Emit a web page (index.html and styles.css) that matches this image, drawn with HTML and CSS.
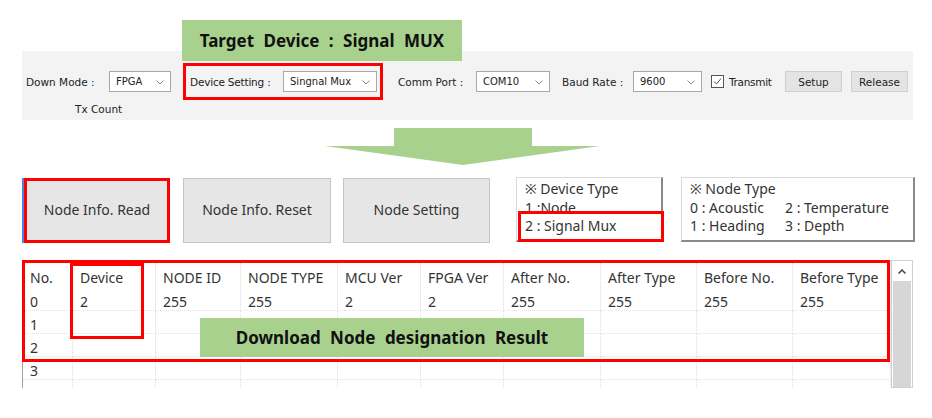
FILE: index.html
```html
<!DOCTYPE html>
<html lang="en">
<head>
  <meta charset="UTF-8">
  <meta name="viewport" content="width=device-width, initial-scale=1.0">
  <title>Node Designation</title>
  <link rel="stylesheet" href="styles.css">
</head>
<body>
  <div class="page">
    <div class="banner">Target Device : Signal MUX</div>

    <div class="toolbar">
      <div class="toolbar-row">
        <span class="tb-label lbl-mode">Down Mode :</span>
        <div class="combo w-mode">FPGA<svg class="chev" viewBox="0 0 8 5"><polyline points="0.5,0.5 4,4 7.5,0.5"/></svg></div>

        <div class="device-group">
          <span class="tb-label lbl-device">Device Setting :</span>
          <div class="combo w-device">Singnal Mux<svg class="chev" viewBox="0 0 8 5"><polyline points="0.5,0.5 4,4 7.5,0.5"/></svg></div>
        </div>

        <span class="tb-label lbl-port">Comm Port :</span>
        <div class="combo w-port">COM10<svg class="chev" viewBox="0 0 8 5"><polyline points="0.5,0.5 4,4 7.5,0.5"/></svg></div>

        <span class="tb-label lbl-baud">Baud Rate :</span>
        <div class="combo w-baud">9600<svg class="chev" viewBox="0 0 8 5"><polyline points="0.5,0.5 4,4 7.5,0.5"/></svg></div>

        <span class="check"><svg viewBox="0 0 13 13"><rect x="0.5" y="0.5" width="12" height="12"/><polyline points="3,6.5 5.5,9 10,3.5"/></svg></span>
        <span class="tb-label lbl-transmit">Transmit</span>
        <button class="tb-button">Setup</button>
        <button class="tb-button btn-release">Release</button>
      </div>
      <div class="tx-count">Tx Count</div>
    </div>

    <svg class="arrow" viewBox="0 0 275 37">
      <polygon points="69,0 207,0 207,18 275,18 138,37 0,18 69,18"/>
    </svg>

    <div class="actions">
      <button class="action-btn btn-read">Node Info. Read</button>
      <button class="action-btn btn-reset">Node Info. Reset</button>
      <button class="action-btn btn-setting">Node Setting</button>

      <div class="legend legend-device">
        <div>※ Device Type</div>
        <div>1 :Node</div>
        <div class="mux-line">2 : Signal Mux</div>
        <div class="mark-mux"></div>
      </div>

      <div class="legend legend-node">
        <div>※ Node Type</div>
        <div class="legend-pair"><span>0 : Acoustic</span><span>2 : Temperature</span></div>
        <div class="legend-pair"><span>1 : Heading</span><span>3 : Depth</span></div>
      </div>
    </div>

    <div class="grid-wrap">
      <div class="grid-area">
        <div class="grid">
          <div class="cell head">No.</div>
          <div class="cell head">Device</div>
          <div class="cell head">NODE ID</div>
          <div class="cell head">NODE TYPE</div>
          <div class="cell head">MCU Ver</div>
          <div class="cell head">FPGA Ver</div>
          <div class="cell head">After No.</div>
          <div class="cell head">After Type</div>
          <div class="cell head">Before No.</div>
          <div class="cell head">Before Type</div>

          <div class="cell">0</div>
          <div class="cell">2</div>
          <div class="cell">255</div>
          <div class="cell">255</div>
          <div class="cell">2</div>
          <div class="cell">2</div>
          <div class="cell">255</div>
          <div class="cell">255</div>
          <div class="cell">255</div>
          <div class="cell">255</div>

          <div class="cell">1</div>
          <div class="cell"></div><div class="cell"></div><div class="cell"></div><div class="cell"></div>
          <div class="cell"></div><div class="cell"></div><div class="cell"></div><div class="cell"></div><div class="cell"></div>

          <div class="cell">2</div>
          <div class="cell"></div><div class="cell"></div><div class="cell"></div><div class="cell"></div>
          <div class="cell"></div><div class="cell"></div><div class="cell"></div><div class="cell"></div><div class="cell"></div>

          <div class="cell">3</div>
          <div class="cell"></div><div class="cell"></div><div class="cell"></div><div class="cell"></div>
          <div class="cell"></div><div class="cell"></div><div class="cell"></div><div class="cell"></div><div class="cell"></div>

          <div class="cell"></div>
          <div class="cell"></div><div class="cell"></div><div class="cell"></div><div class="cell"></div>
          <div class="cell"></div><div class="cell"></div><div class="cell"></div><div class="cell"></div><div class="cell"></div>
        </div>
        <div class="scrollbar">
          <div class="scroll-up"><svg viewBox="0 0 8 5"><polyline points="0.5,4.5 4,1 7.5,4.5"/></svg></div>
          <div class="scroll-track"></div>
        </div>
      </div>

      <div class="mark-grid"></div>
      <div class="mark-device"></div>
      <div class="result-note">Download Node designation Result</div>
    </div>
  </div>
</body>
</html>
```

FILE: styles.css
```css
body {
  margin: 0;
  background-color: #fff;
  font-family: "Noto Sans", "Open Sans", sans-serif;
  color: #333;
}

.page {
  width: 932px;
  height: 418px;
  overflow: hidden;
}

/* annotation banner */
.banner {
  position: relative;
  z-index: 1;
  width: 280px;
  height: 41px;
  margin: 20px 0 -10px 182px;
  background-color: #a9d18e;
  color: #111;
  font-size: 17px;
  font-weight: 700;
  word-spacing: 5px;
  display: flex;
  align-items: center;
  justify-content: center;
}

/* toolbar */
.toolbar {
  width: 891px;
  height: 69px;
  margin-left: 22px;
  background-color: #f3f3f3;
  font-family: "DejaVu Sans", Verdana, sans-serif;
  font-size: 10.5px;
  color: #222;
}

.toolbar-row {
  display: flex;
  align-items: center;
  height: 37px;
  padding-top: 12px;
  padding-left: 4px;
}

.tb-label {
  white-space: nowrap;
}

.lbl-mode { width: 83px; }
.lbl-device { width: 93px; letter-spacing: -0.2px; }
.lbl-port { width: 78px; margin-left: 15px; }
.lbl-baud { width: 71px; margin-left: 12px; }
.lbl-transmit { width: 56px; margin-left: 5px; letter-spacing: -0.3px; }

.combo {
  position: relative;
  box-sizing: border-box;
  height: 21px;
  padding-left: 6px;
  background-color: #fff;
  border: 1px solid #a8a8a8;
  display: flex;
  align-items: center;
  font-size: 10px;
}

.chev {
  position: absolute;
  right: 6px;
  top: 8px;
  width: 8px;
  height: 5px;
  fill: none;
  stroke: #888;
  stroke-width: 1;
}

.w-mode { width: 62px; }
.w-device { width: 94px; }
.w-port { width: 74px; }
.w-baud { width: 69px; }

.device-group {
  box-sizing: border-box;
  display: flex;
  align-items: center;
  width: 200px;
  height: 37px;
  margin-left: 12px;
  padding-left: 4px;
  border: 3px solid #ff0000;
}

.check {
  width: 13px;
  height: 13px;
  margin-left: 9px;
}

.check svg {
  display: block;
  width: 13px;
  height: 13px;
  fill: #fff;
  stroke: #555;
  stroke-width: 1;
}

.check polyline {
  fill: none;
}

.tb-button {
  box-sizing: border-box;
  width: 57px;
  height: 21px;
  padding: 0;
  background-color: #e4e4e4;
  border: 1px solid #cfcfcf;
  font-family: "DejaVu Sans", Verdana, sans-serif;
  font-size: 10.5px;
  color: #222;
}

.btn-release {
  margin-left: 9px;
}

.tx-count {
  height: 18px;
  line-height: 18px;
  padding-left: 53px;
}

/* arrow */
.arrow {
  display: block;
  width: 275px;
  height: 37px;
  margin: 8px 0 0 325px;
  fill: #a9d18e;
}

/* action buttons and legends */
.actions {
  display: flex;
  align-items: flex-start;
  height: 65px;
  margin: 13px 0 0 22px;
}

.action-btn {
  box-sizing: border-box;
  width: 148px;
  height: 65px;
  padding: 0 0 2px;
  background-color: #e6e6e6;
  border: 1px solid #c4c4c4;
  font-family: "Noto Sans", "Open Sans", sans-serif;
  font-size: 14px;
  color: #333;
}

.btn-read {
  border: 3px solid #ff0000;
  box-shadow: -2px 0 0 #4a86e8;
  margin-left: 2px;
  width: 146px;
}

.btn-reset { margin-left: 13px; }
.btn-setting { margin-left: 12px; width: 147px; }

.legend {
  position: relative;
  box-sizing: border-box;
  height: 65px;
  margin-top: -1px;
  padding: 2px 0 0 8px;
  background-color: #fff;
  border: 1px solid #d8d8d8;
  border-right: 2px solid #8a8a8a;
  border-bottom: 2px solid #8a8a8a;
  font-size: 14px;
  line-height: 18.5px;
  color: #333;
}

.legend-device {
  width: 147px;
  margin-left: 26px;
}

.legend-node {
  width: 234px;
  margin-left: 18px;
}

.legend-pair span:first-child {
  display: inline-block;
  width: 95px;
}

.mark-mux {
  position: absolute;
  left: 1px;
  top: 33px;
  width: 146px;
  height: 31px;
  box-sizing: border-box;
  border: 3px solid #ff0000;
  background-color: #fff;
}

.mux-line {
  position: relative;
  z-index: 1;
}

/* result grid */
.grid-wrap {
  position: relative;
  width: 891px;
  height: 130px;
  margin: 17px 0 0 22px;
}

.grid-area {
  display: flex;
  height: 128px;
  margin-top: 2px;
  overflow: hidden;
}

.grid {
  display: grid;
  grid-template-columns: 50px 83px 85px 97px 83px 83px 97px 96px 96px 98px;
  grid-auto-rows: 23px;
  grid-template-rows: 28px;
  width: 868px;
  border-left: 1px solid #a0a0a0;
  box-sizing: border-box;
  font-size: 14px;
  color: #333;
}

.cell {
  box-sizing: border-box;
  padding: 5px 0 0 7px;
  border-right: 1px dotted #dcdcdc;
  border-bottom: 1px dotted #e2e2e2;
  display: flex;
  align-items: center;
  white-space: nowrap;
}

.cell.head {
  border-bottom: none;
  padding-top: 6px;
}

.scrollbar {
  box-sizing: border-box;
  width: 23px;
  margin-left: 1px;
  border: 1px solid #cfcfcf;
  background-color: #fff;
  display: flex;
  flex-direction: column;
}

.scroll-up {
  height: 20px;
  display: flex;
  align-items: center;
  justify-content: center;
}

.scroll-up svg {
  width: 8px;
  height: 5px;
  fill: none;
  stroke: #444;
  stroke-width: 1.5;
}

.scroll-track {
  flex: 1;
  margin: 0 1px;
  background-color: #d6d6d6;
}

/* annotation overlays */
.mark-grid {
  position: absolute;
  left: 0;
  top: 0;
  box-sizing: border-box;
  width: 868px;
  height: 102px;
  border: 3px solid #ff0000;
}

.mark-device {
  position: absolute;
  left: 48px;
  top: 3px;
  box-sizing: border-box;
  width: 74px;
  height: 76px;
  border: 3px solid #ff0000;
}

.result-note {
  position: absolute;
  left: 178px;
  top: 58px;
  width: 384px;
  height: 39px;
  background-color: #a9d18e;
  color: #111;
  font-size: 17px;
  font-weight: 700;
  word-spacing: 5px;
  display: flex;
  align-items: center;
  justify-content: center;
}
```
